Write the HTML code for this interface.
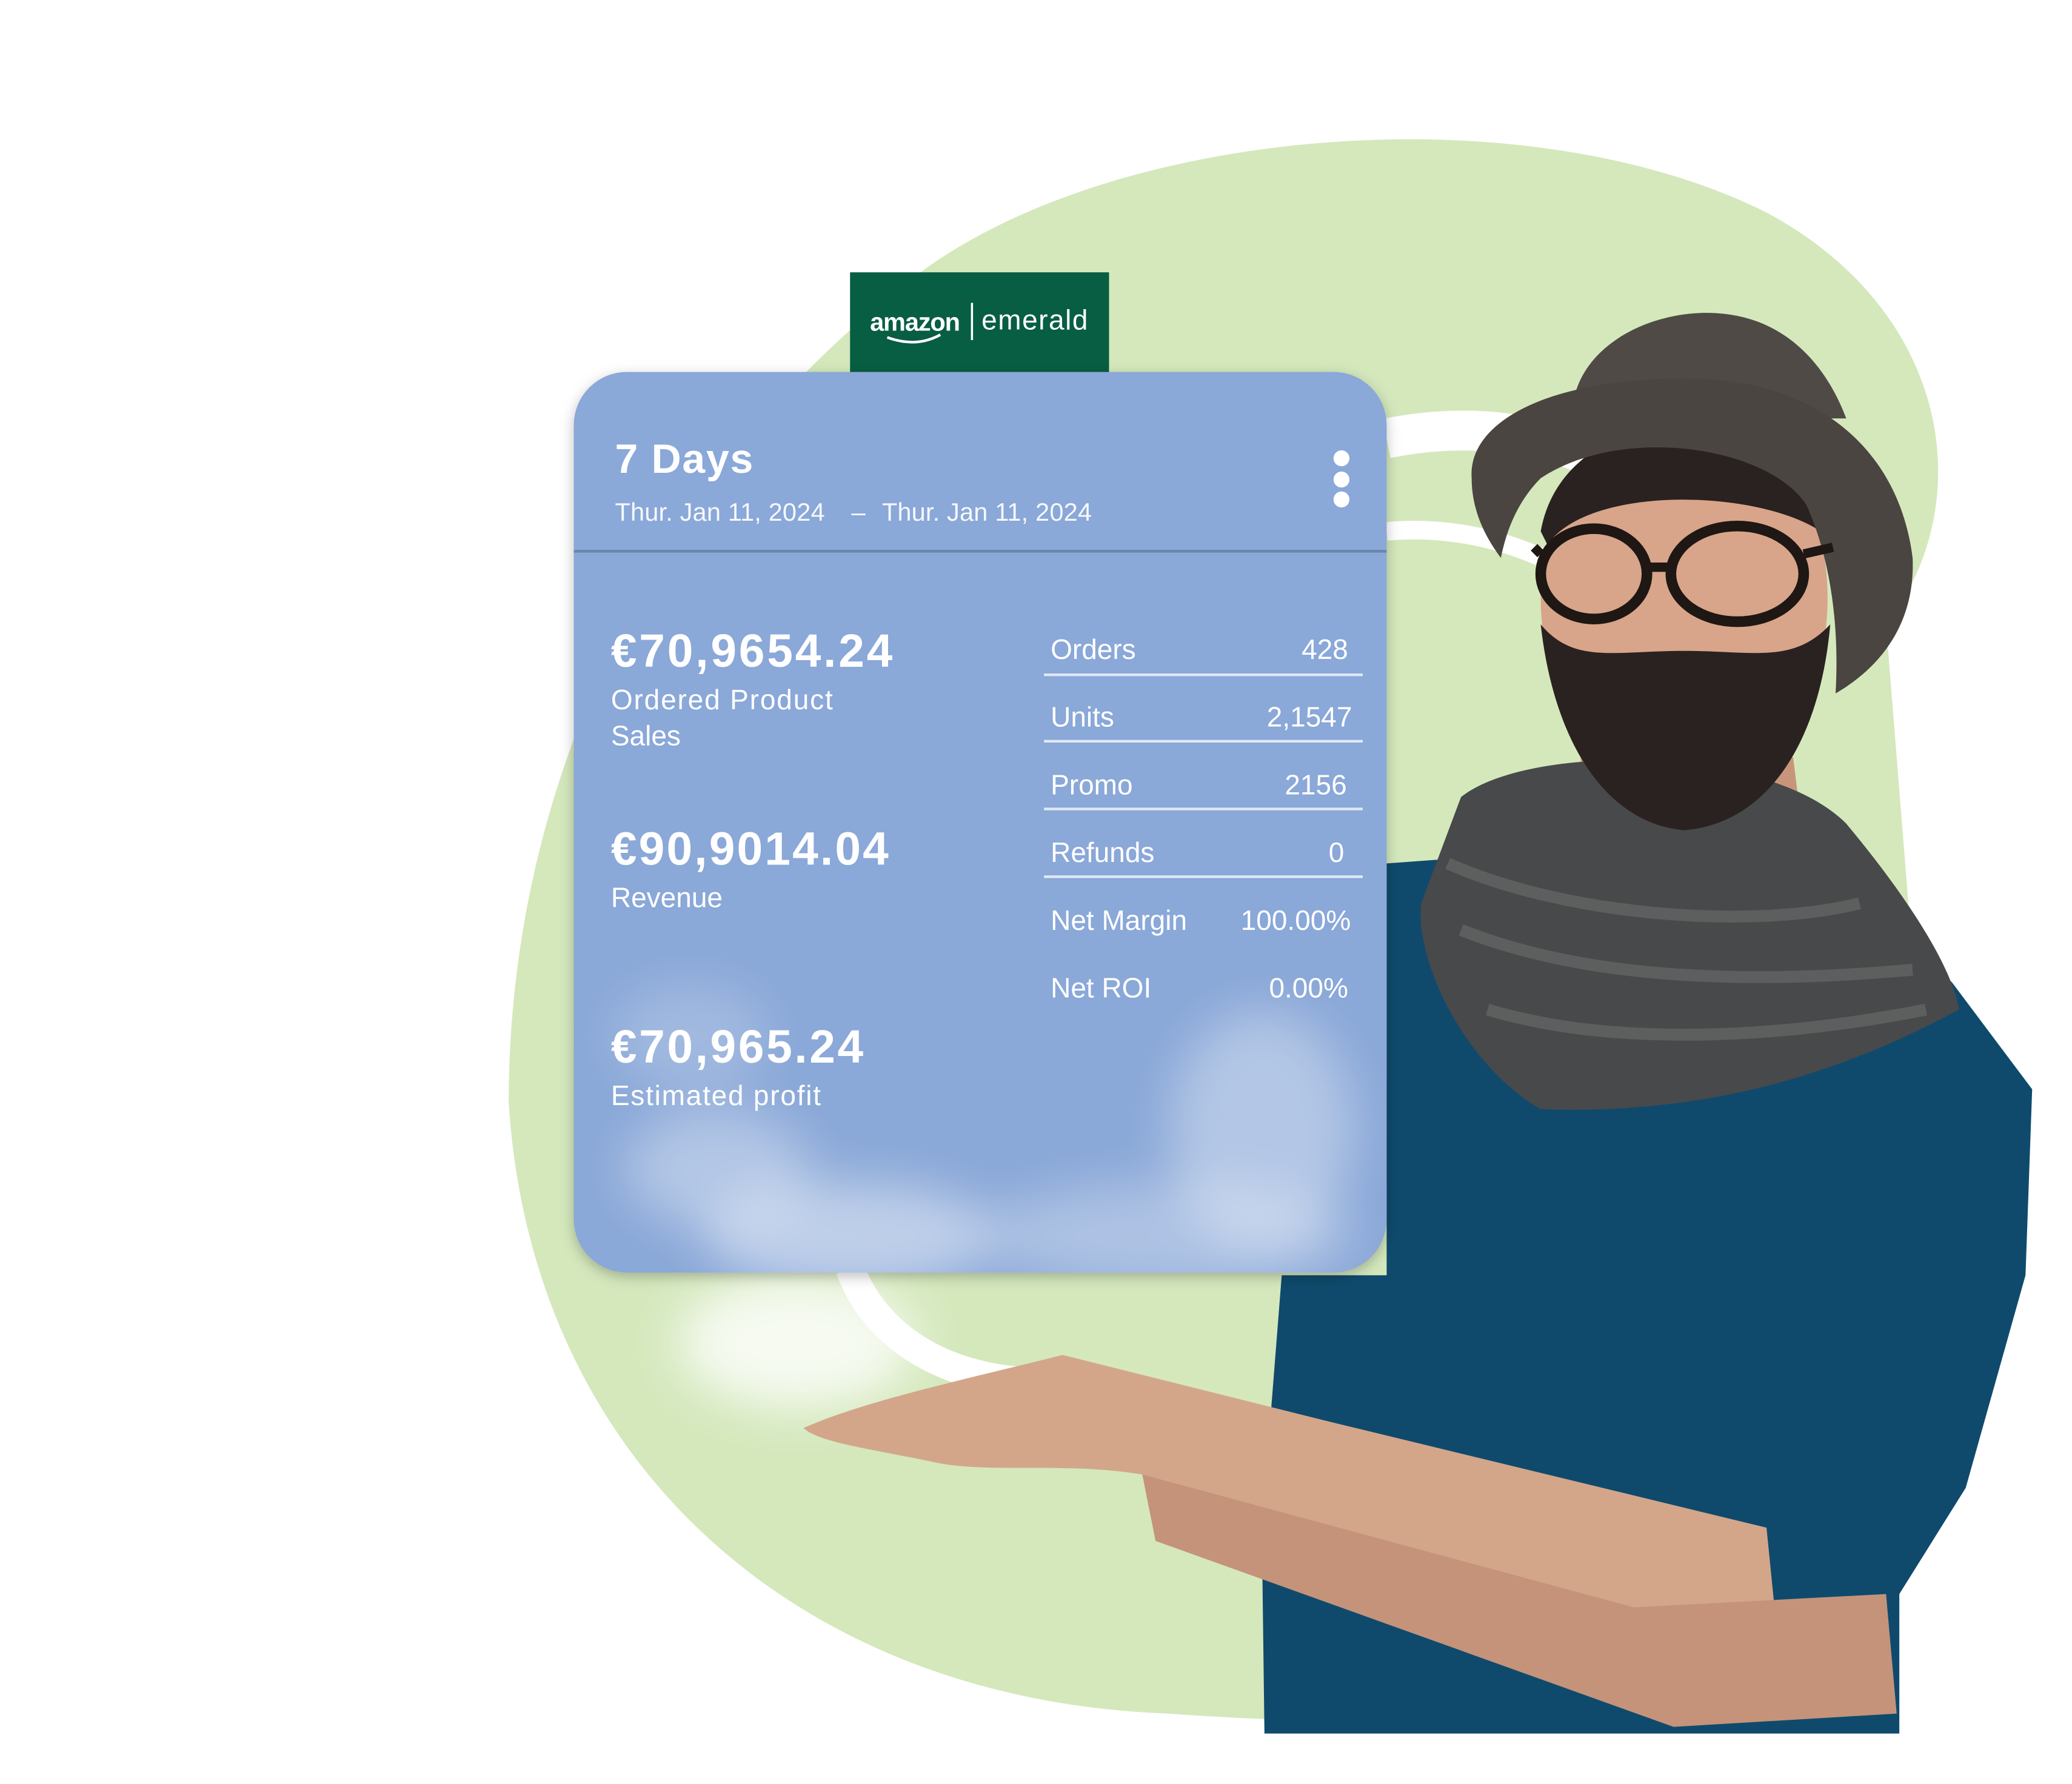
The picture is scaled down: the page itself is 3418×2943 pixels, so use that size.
<!DOCTYPE html>
<html><head><meta charset="utf-8"><style>
html,body{margin:0;padding:0;background:#fff;width:3418px;height:2943px;overflow:hidden}
svg{display:block}
text{font-family:"Liberation Sans",sans-serif;fill:#fff}
</style></head><body>
<svg width="3418" height="2943" viewBox="0 0 1560 1343" preserveAspectRatio="none" xmlns="http://www.w3.org/2000/svg">
<defs>
<filter id="blur" x="-50%" y="-50%" width="200%" height="200%"><feGaussianBlur stdDeviation="18"/></filter>
<filter id="sh" x="-10%" y="-10%" width="120%" height="120%"><feDropShadow dx="0" dy="3" stdDeviation="5" flood-color="#000" flood-opacity="0.25"/></filter>
<clipPath id="cardclip"><rect x="432" y="280" width="612" height="678" rx="40"/></clipPath>
</defs>
<rect width="1560" height="1343" fill="#fff"/>
<!-- green blob -->
<path d="M383 830 C383 560 520 330 700 200 C850 95 1150 70 1330 160 C1470 235 1490 380 1420 470 L1440 720 C1470 900 1400 1200 1150 1285 C1050 1300 950 1295 880 1290 C600 1280 400 1100 383 830 Z" fill="#d4e8bc"/>
<path d="M1044 330 C1120 315 1180 330 1230 360" stroke="#fff" stroke-width="30" fill="none"/>
<path d="M1044 400 C1100 395 1150 410 1200 440" stroke="#fff" stroke-width="14" fill="none"/>
<path d="M640 955 C660 1010 720 1045 800 1040" stroke="#fff" stroke-width="22" fill="none"/>
<ellipse cx="600" cy="1010" rx="90" ry="50" fill="#fff" opacity="0.8" filter="url(#blur)"/>
<!-- body -->
<path d="M1044 650 L1180 640 L1370 630 L1470 740 L1530 820 L1525 960 L1480 1120 L1430 1200 L1430 1305 L952 1305 L950 1150 L965 960 L1044 960 Z" fill="#0f4a6c"/>
<!-- forearms -->
<path d="M605 1075 C650 1055 720 1040 800 1020 L880 1040 L1000 1070 L1330 1150 L1340 1250 L1250 1245 L940 1140 L860 1110 C800 1100 740 1110 700 1100 C650 1090 615 1085 605 1075 Z" fill="#d3a68a"/>
<path d="M860 1110 L1230 1210 L1420 1200 L1428 1290 L1260 1300 L870 1160 Z" fill="#c4937a"/>
<!-- neck -->
<path d="M1190 570 L1350 570 L1360 650 L1200 670 Z" fill="#c9957a"/>
<!-- scarf -->
<path d="M1100 600 C1150 560 1330 560 1390 620 C1440 680 1470 730 1475 760 C1400 800 1300 840 1160 835 C1100 800 1065 720 1070 680 Z" fill="#48494b"/>
<path d="M1100 700 C1200 740 1330 740 1440 730 M1120 760 C1220 790 1350 780 1450 760 M1090 650 C1180 690 1320 700 1400 680" stroke="#5d5e5e" stroke-width="9" fill="none"/>
<!-- head -->
<ellipse cx="1268" cy="450" rx="108" ry="148" fill="#d8a58a"/>
<path d="M1160 470 C1170 560 1210 620 1268 625 C1330 620 1370 560 1378 470 C1350 500 1320 490 1268 490 C1215 490 1185 500 1160 470 Z" fill="#2a2220"/>
<path d="M1160 400 C1170 345 1220 320 1275 318 C1335 318 1375 350 1382 410 C1350 370 1200 360 1165 410 Z" fill="#2a2220"/>
<!-- hat -->
<path d="M1185 300 C1195 255 1250 232 1295 236 C1345 240 1375 275 1390 315 L1190 315 Z" fill="#4f4a46"/>
<path d="M1108 360 C1105 320 1160 285 1270 285 C1370 285 1430 340 1440 420 C1442 465 1420 500 1382 522 C1385 470 1378 420 1360 380 C1330 335 1220 320 1160 360 C1145 375 1135 395 1130 420 C1115 400 1108 380 1108 360 Z" fill="#4a4541"/>
<!-- glasses -->
<ellipse cx="1200" cy="432" rx="40" ry="34" fill="none" stroke="#1e1714" stroke-width="8"/>
<ellipse cx="1308" cy="432" rx="50" ry="36" fill="none" stroke="#1e1714" stroke-width="8"/>
<path d="M1240 427 L1258 427 M1160 417 L1155 412 M1358 417 L1380 412" stroke="#1e1714" stroke-width="7"/>
<!-- logo box -->
<rect x="640" y="205" width="195" height="80" fill="#075e42"/>
<text x="655" y="249" font-size="19" font-weight="bold" textLength="68">amazon</text>
<path d="M668 254 Q690 262 708 252" stroke="#fff" stroke-width="2" fill="none"/>
<rect x="731" y="228" width="1.6" height="28" fill="#fff"/>
<text x="739" y="248" font-size="21" textLength="80">emerald</text>
<!-- card -->
<g filter="url(#sh)"><rect x="432" y="280" width="612" height="678" rx="40" fill="#8aa8d8"/></g>
<g clip-path="url(#cardclip)" filter="url(#blur)">
<ellipse cx="540" cy="880" rx="70" ry="45" fill="#fff" opacity="0.35"/>
<ellipse cx="640" cy="930" rx="110" ry="40" fill="#fff" opacity="0.45"/>
<ellipse cx="950" cy="850" rx="70" ry="90" fill="#fff" opacity="0.35"/>
<ellipse cx="880" cy="930" rx="140" ry="40" fill="#fff" opacity="0.3"/>
<ellipse cx="520" cy="780" rx="60" ry="40" fill="#fff" opacity="0.2"/>
</g>
<rect x="432" y="414" width="612" height="2" fill="#6a84ad"/>
<text x="463" y="356" font-size="31" font-weight="bold" textLength="104">7 Days</text>
<text x="463" y="392" font-size="19" fill-opacity="0.92" textLength="158">Thur. Jan 11, 2024</text>
<text x="641" y="392" font-size="19" fill-opacity="0.92">–</text>
<text x="664" y="392" font-size="19" fill-opacity="0.92" textLength="158">Thur. Jan 11, 2024</text>
<circle cx="1010" cy="345" r="6" fill="#fff"/><circle cx="1010" cy="361" r="6" fill="#fff"/><circle cx="1010" cy="376" r="6" fill="#fff"/>
<text x="460" y="502" font-size="35" font-weight="bold" textLength="212">€70,9654.24</text>
<text x="460" y="534" font-size="21" textLength="167">Ordered Product</text>
<text x="460" y="561" font-size="21">Sales</text>
<text x="460" y="651" font-size="35" font-weight="bold" textLength="209">€90,9014.04</text>
<text x="460" y="683" font-size="21">Revenue</text>
<text x="460" y="800" font-size="35" font-weight="bold" textLength="190">€70,965.24</text>
<text x="460" y="832" font-size="21" textLength="158">Estimated profit</text>
<g font-size="21">
<text x="791" y="496">Orders</text><text x="1015" y="496" text-anchor="end">428</text>
<text x="791" y="547">Units</text><text x="1018" y="547" text-anchor="end">2,1547</text>
<text x="791" y="598">Promo</text><text x="1014" y="598" text-anchor="end">2156</text>
<text x="791" y="649">Refunds</text><text x="1012" y="649" text-anchor="end">0</text>
<text x="791" y="700">Net Margin</text><text x="1017" y="700" text-anchor="end">100.00%</text>
<text x="791" y="751">Net ROI</text><text x="1015" y="751" text-anchor="end">0.00%</text>
</g>
<g fill="#dfe8f5"><rect x="786" y="507" width="240" height="2"/><rect x="786" y="557" width="240" height="2"/><rect x="786" y="608" width="240" height="2"/><rect x="786" y="659" width="240" height="2"/></g>
</svg>
</body></html>
